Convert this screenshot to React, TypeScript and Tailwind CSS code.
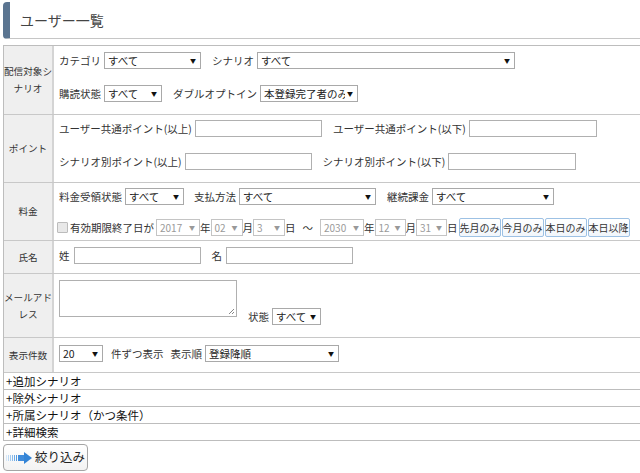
import React from 'react';

const font = { fontFamily: '"Noto Sans CJK JP", "Noto Sans", sans-serif' };

function Sel({ value, w, dim = false }: { value: string; w: string; dim?: boolean }) {
  return (
    <div
      className={`relative h-[17px] shrink-0 overflow-hidden bg-white border ${dim ? 'border-[#c4c4c4] text-[#9a9a9a]' : 'border-[#a9a9a9] text-[#222]'} ${w}`}
    >
      <span className={`absolute left-[3px] top-0 leading-[15px] whitespace-nowrap ${dim ? 'text-[10px]' : 'text-[10.5px]'}`}>{value}</span>
      <span className={`absolute right-[4px] top-0 leading-[15px] text-[6px] bg-white pl-[2px] ${dim ? 'text-[#999]' : 'text-[#111]'}`}>▼</span>
    </div>
  );
}

function Inp({ w }: { w: string }) {
  return <div className={`h-[17px] shrink-0 bg-white border border-[#b0b0b0] ${w}`} />;
}

function Row({ label, h, children }: { label: React.ReactNode; h: string; children: React.ReactNode }) {
  return (
    <div className={`flex border-b border-[#c8c8c8] ${h}`}>
      <div className="w-[50px] shrink-0 bg-[#efefef] border-r-2 border-[#d4d4d4] flex items-center justify-center text-center text-[9.6px] leading-[17px] text-[#333]">
        {label}
      </div>
      <div className="flex-1 pl-[5px]">{children}</div>
    </div>
  );
}

function QuickBtn({ t }: { t: string }) {
  return (
    <div className="h-[19px] w-[42px] shrink-0 border border-[#9dc1e4] rounded-[2px] bg-gradient-to-b from-white to-[#f1f6fb] text-[#333] text-[10px] whitespace-nowrap flex items-center justify-center leading-none">
      {t}
    </div>
  );
}

function Toggle({ t }: { t: string }) {
  return (
    <div className="h-[17px] border-b border-[#bdbdbd] pl-[2px] text-[11.5px] leading-[16px] text-[#111]">
      {t}
    </div>
  );
}

export default function App() {
  return (
    <div className="w-[640px] h-[473px] bg-white overflow-hidden text-[10.5px] text-[#333]" style={font}>
      <div className="ml-[3px] mt-[2px] h-[37px] border-l-[7px] border-l-[#5b7591] border-b border-b-[#c6c6c6] rounded-l-[4px] flex items-center pl-[10px]">
        <span className="text-[14px] text-[#444]">ユーザー一覧</span>
      </div>

      <div className="ml-[3px] mt-[6px] w-[660px] border-l border-t border-[#bdbdbd]">
        <Row label={<span>配信対象シナリオ</span>} h="h-[69px]">
          <div className="pt-[6px] flex flex-col gap-[16px]">
            <div className="flex items-center h-[17px]">
              <span>カテゴリ</span>
              <div className="ml-[3px]"><Sel value="すべて" w="w-[97px]" /></div>
              <span className="ml-[11px]">シナリオ</span>
              <div className="ml-[3px]"><Sel value="すべて" w="w-[258px]" /></div>
            </div>
            <div className="flex items-center h-[17px]">
              <span>購読状態</span>
              <div className="ml-[3px]"><Sel value="すべて" w="w-[58px]" /></div>
              <span className="ml-[11px]">ダブルオプトイン</span>
              <div className="ml-[3px]"><Sel value="本登録完了者のみ" w="w-[98px]" /></div>
            </div>
          </div>
        </Row>

        <Row label="ポイント" h="h-[68px]">
          <div className="pt-[5px] flex flex-col gap-[16px]">
            <div className="flex items-center h-[17px]">
              <span>ユーザー共通ポイント(以上)</span>
              <div className="ml-[3px]"><Inp w="w-[127px]" /></div>
              <span className="ml-[11px]">ユーザー共通ポイント(以下)</span>
              <div className="ml-[3px]"><Inp w="w-[128px]" /></div>
            </div>
            <div className="flex items-center h-[17px]">
              <span>シナリオ別ポイント(以上)</span>
              <div className="ml-[3px]"><Inp w="w-[127px]" /></div>
              <span className="ml-[11px]">シナリオ別ポイント(以下)</span>
              <div className="ml-[3px]"><Inp w="w-[128px]" /></div>
            </div>
          </div>
        </Row>

        <Row label="料金" h="h-[58px]">
          <div className="pt-[5px] flex flex-col gap-[13px]">
            <div className="flex items-center h-[17px]">
              <span>料金受領状態</span>
              <div className="ml-[3px]"><Sel value="すべて" w="w-[59px]" /></div>
              <span className="ml-[10px]">支払方法</span>
              <div className="ml-[3px]"><Sel value="すべて" w="w-[137px]" /></div>
              <span className="ml-[11px]">継続課金</span>
              <div className="ml-[3px]"><Sel value="すべて" w="w-[122px]" /></div>
            </div>
            <div className="flex items-center h-[19px] -ml-[2px]">
              <div className="w-[11px] h-[11px] border border-[#bcbcbc] bg-[#e8e8e8] rounded-[1px] shrink-0" />
              <span className="ml-[2px]">有効期限終了日が</span>
              <div className="ml-[2px]"><Sel value="2017" w="w-[44px]" dim /></div>
              <span>年</span>
              <Sel value="02" w="w-[32px]" dim />
              <span>月</span>
              <Sel value="3" w="w-[32px]" dim />
              <span>日</span>
              <span className="ml-[7px] mr-[7px]">～</span>
              <Sel value="2030" w="w-[44px]" dim />
              <span>年</span>
              <Sel value="12" w="w-[31px]" dim />
              <span>月</span>
              <Sel value="31" w="w-[31px]" dim />
              <span>日</span>
              <div className="ml-[1px] flex gap-[1px]">
                <QuickBtn t="先月のみ" />
                <QuickBtn t="今月のみ" />
                <QuickBtn t="本日のみ" />
                <QuickBtn t="本日以降" />
              </div>
            </div>
          </div>
        </Row>

        <Row label="氏名" h="h-[33px]">
          <div className="pt-[6px] flex items-center h-[23px]">
            <span>姓</span>
            <div className="ml-[4px]"><Inp w="w-[127px]" /></div>
            <span className="ml-[11px]">名</span>
            <div className="ml-[4px]"><Inp w="w-[127px]" /></div>
          </div>
        </Row>

        <Row label={<span>メールアドレス</span>} h="h-[64px]">
          <div className="pt-[6px] flex items-start">
            <div className="relative w-[178px] h-[37px] border border-[#b0b0b0] bg-white shrink-0">
              <svg className="absolute right-[1px] bottom-[1px]" width="7" height="7" viewBox="0 0 7 7">
                <path d="M6 1 L1 6 M6 4 L4 6" stroke="#888" strokeWidth="1" />
              </svg>
            </div>
            <div className="mt-[28px] ml-[11px] flex items-center h-[17px]">
              <span>状態</span>
              <div className="ml-[3px]"><Sel value="すべて" w="w-[49px]" /></div>
            </div>
          </div>
        </Row>

        <Row label="表示件数" h="h-[35px]">
          <div className="pt-[7px] flex items-center h-[24px]">
            <Sel value="20" w="w-[44px]" />
            <span className="ml-[8px]">件ずつ表示</span>
            <span className="ml-[7px]">表示順</span>
            <div className="ml-[3px]"><Sel value="登録降順" w="w-[134px]" /></div>
          </div>
        </Row>

        <Toggle t="+追加シナリオ" />
        <Toggle t="+除外シナリオ" />
        <Toggle t="+所属シナリオ（かつ条件）" />
        <Toggle t="+詳細検索" />
      </div>

      <div className="ml-[3px] mt-[3px] w-[85px] h-[27px] border border-[#a5a5a5] rounded-[4px] bg-gradient-to-b from-white to-[#f3f3f3] flex items-center pl-[2px] whitespace-nowrap">
        <svg className="shrink-0" width="27" height="12" viewBox="0 0 27 12">
          <rect x="0" y="3" width="1" height="6" fill="#d6e8f9" />
          <rect x="2" y="3" width="1" height="6" fill="#bcd9f4" />
          <rect x="4" y="3" width="1" height="6" fill="#a2caf0" />
          <rect x="6" y="3" width="1" height="6" fill="#88bbeb" />
          <rect x="8" y="3" width="1" height="6" fill="#6eabe6" />
          <rect x="10" y="3" width="1" height="6" fill="#559be1" />
          <rect x="12" y="3" width="7" height="6" fill="#3f8cdb" />
          <path d="M18 0 L26 6 L18 12 Z" fill="#3384d6" />
        </svg>
        <span className="ml-[2px] text-[12.5px] text-[#222]">絞り込み</span>
      </div>
    </div>
  );
}
